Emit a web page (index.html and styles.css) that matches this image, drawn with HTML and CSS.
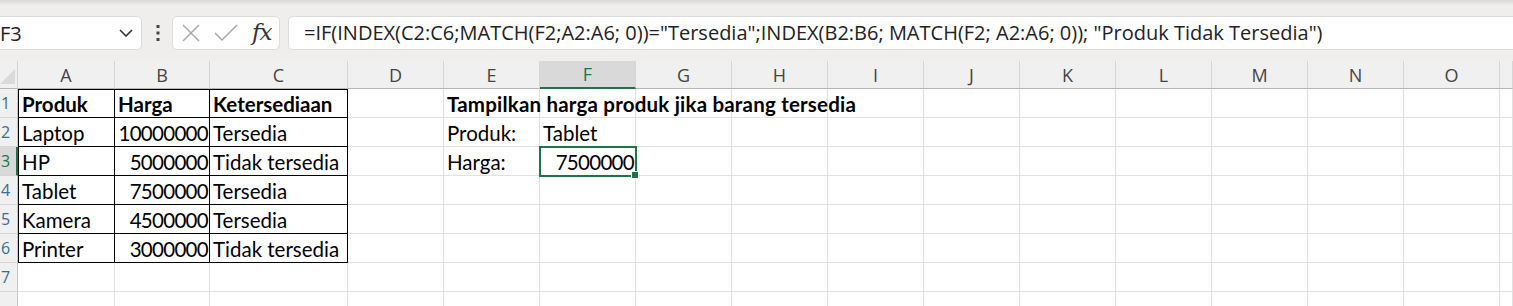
FILE: index.html
```html
<!DOCTYPE html>
<html lang="id">
<head>
    <meta charset="UTF-8">
    <title>Excel - INDEX MATCH</title>
    <link rel="stylesheet" href="styles.css">
</head>
<body>

    <div class="formula-bar">
        <div class="name-box">
            <span>F3</span>
            <svg class="chevron" width="14" height="8" viewBox="0 0 14 8"><path d="M1 1 L7 7 L13 1" fill="none" stroke="#333" stroke-width="1.6"/></svg>
        </div>
        <svg class="dots" width="4" height="16" viewBox="0 0 4 16"><rect x="0.5" y="0" width="3" height="3" fill="#444"/><rect x="0.5" y="6.5" width="3" height="3" fill="#444"/><rect x="0.5" y="13" width="3" height="3" fill="#444"/></svg>
        <div class="fx-buttons">
            <svg width="18" height="18" viewBox="0 0 18 18"><path d="M1 1 L17 17 M17 1 L1 17" stroke="#a8a8a8" stroke-width="1.5"/></svg>
            <svg width="24" height="18" viewBox="0 0 24 18"><path d="M1 9 L8 16 L23 1" fill="none" stroke="#a8a8a8" stroke-width="1.5"/></svg>
            <span class="fx">fx</span>
        </div>
        <div class="formula-input">=IF(INDEX(C2:C6;MATCH(F2;A2:A6; 0))="Tersedia";INDEX(B2:B6; MATCH(F2; A2:A6; 0)); "Produk Tidak Tersedia")</div>
    </div>

    <div class="sheet">
        <div class="row head">
            <div class="corner"><svg width="15" height="15" viewBox="0 0 15 15"><polygon points="15,0 15,15 0,15" fill="#dadada"/></svg></div>
            <div class="c">A</div><div class="c">B</div><div class="c">C</div><div class="c">D</div>
            <div class="c">E</div><div class="c active-col">F</div><div class="c">G</div><div class="c">H</div>
            <div class="c">I</div><div class="c">J</div><div class="c">K</div><div class="c">L</div>
            <div class="c">M</div><div class="c">N</div><div class="c">O</div><div class="c"></div>
        </div>

        <div class="row">
            <div class="rh">1</div>
            <div class="c bold tb tl">Produk</div><div class="c bold tb">Harga</div><div class="c bold tb">Ketersediaan</div>
            <div class="c"></div><div class="c bold nowrap">Tampilkan harga produk jika barang tersedia</div><div class="c"></div><div class="c"></div><div class="c"></div>
            <div class="c"></div><div class="c"></div><div class="c"></div><div class="c"></div>
            <div class="c"></div><div class="c"></div><div class="c"></div><div class="c"></div>
        </div>

        <div class="row">
            <div class="rh">2</div>
            <div class="c tb tl">Laptop</div><div class="c tb num">10000000</div><div class="c tb">Tersedia</div>
            <div class="c"></div><div class="c">Produk:</div><div class="c">Tablet</div><div class="c"></div><div class="c"></div>
            <div class="c"></div><div class="c"></div><div class="c"></div><div class="c"></div>
            <div class="c"></div><div class="c"></div><div class="c"></div><div class="c"></div>
        </div>

        <div class="row">
            <div class="rh active-row">3</div>
            <div class="c tb tl">HP</div><div class="c tb num">5000000</div><div class="c tb">Tidak tersedia</div>
            <div class="c"></div><div class="c">Harga:</div><div class="c num selected">7500000<span class="handle"></span></div><div class="c"></div><div class="c"></div>
            <div class="c"></div><div class="c"></div><div class="c"></div><div class="c"></div>
            <div class="c"></div><div class="c"></div><div class="c"></div><div class="c"></div>
        </div>

        <div class="row">
            <div class="rh">4</div>
            <div class="c tb tl">Tablet</div><div class="c tb num">7500000</div><div class="c tb">Tersedia</div>
            <div class="c"></div><div class="c"></div><div class="c"></div><div class="c"></div><div class="c"></div>
            <div class="c"></div><div class="c"></div><div class="c"></div><div class="c"></div>
            <div class="c"></div><div class="c"></div><div class="c"></div><div class="c"></div>
        </div>

        <div class="row">
            <div class="rh">5</div>
            <div class="c tb tl">Kamera</div><div class="c tb num">4500000</div><div class="c tb">Tersedia</div>
            <div class="c"></div><div class="c"></div><div class="c"></div><div class="c"></div><div class="c"></div>
            <div class="c"></div><div class="c"></div><div class="c"></div><div class="c"></div>
            <div class="c"></div><div class="c"></div><div class="c"></div><div class="c"></div>
        </div>

        <div class="row">
            <div class="rh">6</div>
            <div class="c tb tl">Printer</div><div class="c tb num">3000000</div><div class="c tb">Tidak tersedia</div>
            <div class="c"></div><div class="c"></div><div class="c"></div><div class="c"></div><div class="c"></div>
            <div class="c"></div><div class="c"></div><div class="c"></div><div class="c"></div>
            <div class="c"></div><div class="c"></div><div class="c"></div><div class="c"></div>
        </div>

        <div class="row">
            <div class="rh">7</div>
            <div class="c"></div><div class="c"></div><div class="c"></div>
            <div class="c"></div><div class="c"></div><div class="c"></div><div class="c"></div><div class="c"></div>
            <div class="c"></div><div class="c"></div><div class="c"></div><div class="c"></div>
            <div class="c"></div><div class="c"></div><div class="c"></div><div class="c"></div>
        </div>

        <div class="row">
            <div class="rh"></div>
            <div class="c"></div><div class="c"></div><div class="c"></div>
            <div class="c"></div><div class="c"></div><div class="c"></div><div class="c"></div><div class="c"></div>
            <div class="c"></div><div class="c"></div><div class="c"></div><div class="c"></div>
            <div class="c"></div><div class="c"></div><div class="c"></div><div class="c"></div>
        </div>
    </div>

</body>
</html>
```

FILE: styles.css
```css
body {
    margin: 0;
    width: 1513px;
    height: 306px;
    overflow: hidden;
    background-color: #fff;
    font-family: Lato, "Noto Sans", sans-serif;
}

/* Formula bar */
.formula-bar {
    height: 61px;
    box-sizing: border-box;
    padding-top: 16px;
    display: flex;
    align-items: flex-start;
    background: linear-gradient(#d9d9d9 0, #e8e8e8 4px, #efeeec 5px, #efeeec 100%);
}
.name-box {
    margin-left: -10px;
    width: 152px;
    height: 34px;
    box-sizing: border-box;
    padding: 0 8px 0 9px;
    background-color: #fff;
    border: 1px solid #dcdcdc;
    border-radius: 5px;
    display: flex;
    align-items: center;
    justify-content: space-between;
    font-family: "Open Sans", sans-serif;
    font-size: 20px;
    color: #222;
}
.dots {
    margin: 9px 12px 0 14px;
}
.fx-buttons {
    width: 108px;
    height: 34px;
    box-sizing: border-box;
    background-color: #fff;
    border: 1px solid #dcdcdc;
    border-radius: 5px;
    display: flex;
    align-items: center;
    gap: 14px;
    padding-left: 9px;
}
.fx {
    font-family: "DejaVu Serif", serif;
    font-style: italic;
    font-size: 23px;
    color: #333;
    margin-top: -3px;
    letter-spacing: -1px;
}
.formula-input {
    margin-left: 8px;
    flex: 1;
    height: 34px;
    box-sizing: border-box;
    background-color: #fff;
    border: 1px solid #dcdcdc;
    border-right: none;
    border-radius: 5px 0 0 5px;
    padding-left: 15px;
    line-height: 31px;
    font-family: "Open Sans", sans-serif;
    font-size: 20px;
    color: #222;
    white-space: nowrap;
}

/* Grid */
.row {
    display: grid;
    grid-template-columns: 18px 97px 95px 138px repeat(12, 96px) 1fr;
    height: 29px;
}
.row.head {
    height: 28px;
    background-color: #f0f0f0;
}
.c, .rh, .corner {
    box-sizing: border-box;
    border-right: 1px solid #e1e1e1;
    border-bottom: 1px solid #e1e1e1;
    font-size: 20.5px;
    color: #000;
    padding: 0 2px 1px 3px;
    display: flex;
    align-items: flex-end;
    white-space: nowrap;
    position: relative;
}
.head .c {
    justify-content: center;
    align-items: center;
    padding: 0;
    font-family: "Open Sans", sans-serif;
    font-size: 18px;
    color: #444;
    border-right-color: #d6d6d6;
    border-bottom-color: #b5b5b5;
}
.corner {
    padding: 0;
    align-items: flex-end;
    justify-content: flex-start;
    border-bottom-color: #b5b5b5;
    border-right-color: #d6d6d6;
    padding-bottom: 4px;
}
.rh {
    background-color: #f0f0f0;
    border-right-color: #c8c8c8;
    border-bottom-color: #d6d6d6;
    font-family: "Open Sans", sans-serif;
    font-size: 16px;
    color: #3c6a96;
    justify-content: flex-start;
    align-items: center;
    padding: 0 0 0 1px;
    overflow: hidden;
}
.head .active-col {
    background-color: #d9d9d9;
    color: #217346;
    border-bottom: 2px solid #217346;
}
.rh.active-row {
    background-color: #d9d9d9;
    color: #217346;
    border-right: 2px solid #217346;
}
.bold {
    font-weight: bold;
}
.nowrap {
    overflow: visible;
    z-index: 1;
    letter-spacing: 0.2px;
}
.num {
    justify-content: flex-end;
    padding-right: 1px;
    letter-spacing: -0.7px;
}
.tb {
    border-right-color: #000;
    border-bottom-color: #000;
}
.row:nth-child(2) .tb {
    border-top: 1px solid #000;
}
.tl {
    border-left: 1px solid #000;
}
.selected {
    outline: 2px solid #217346;
    outline-offset: -1px;
    z-index: 2;
}
.handle {
    position: absolute;
    right: -4px;
    bottom: -4px;
    width: 6px;
    height: 6px;
    background-color: #217346;
    border: 1px solid #fff;
}
```
